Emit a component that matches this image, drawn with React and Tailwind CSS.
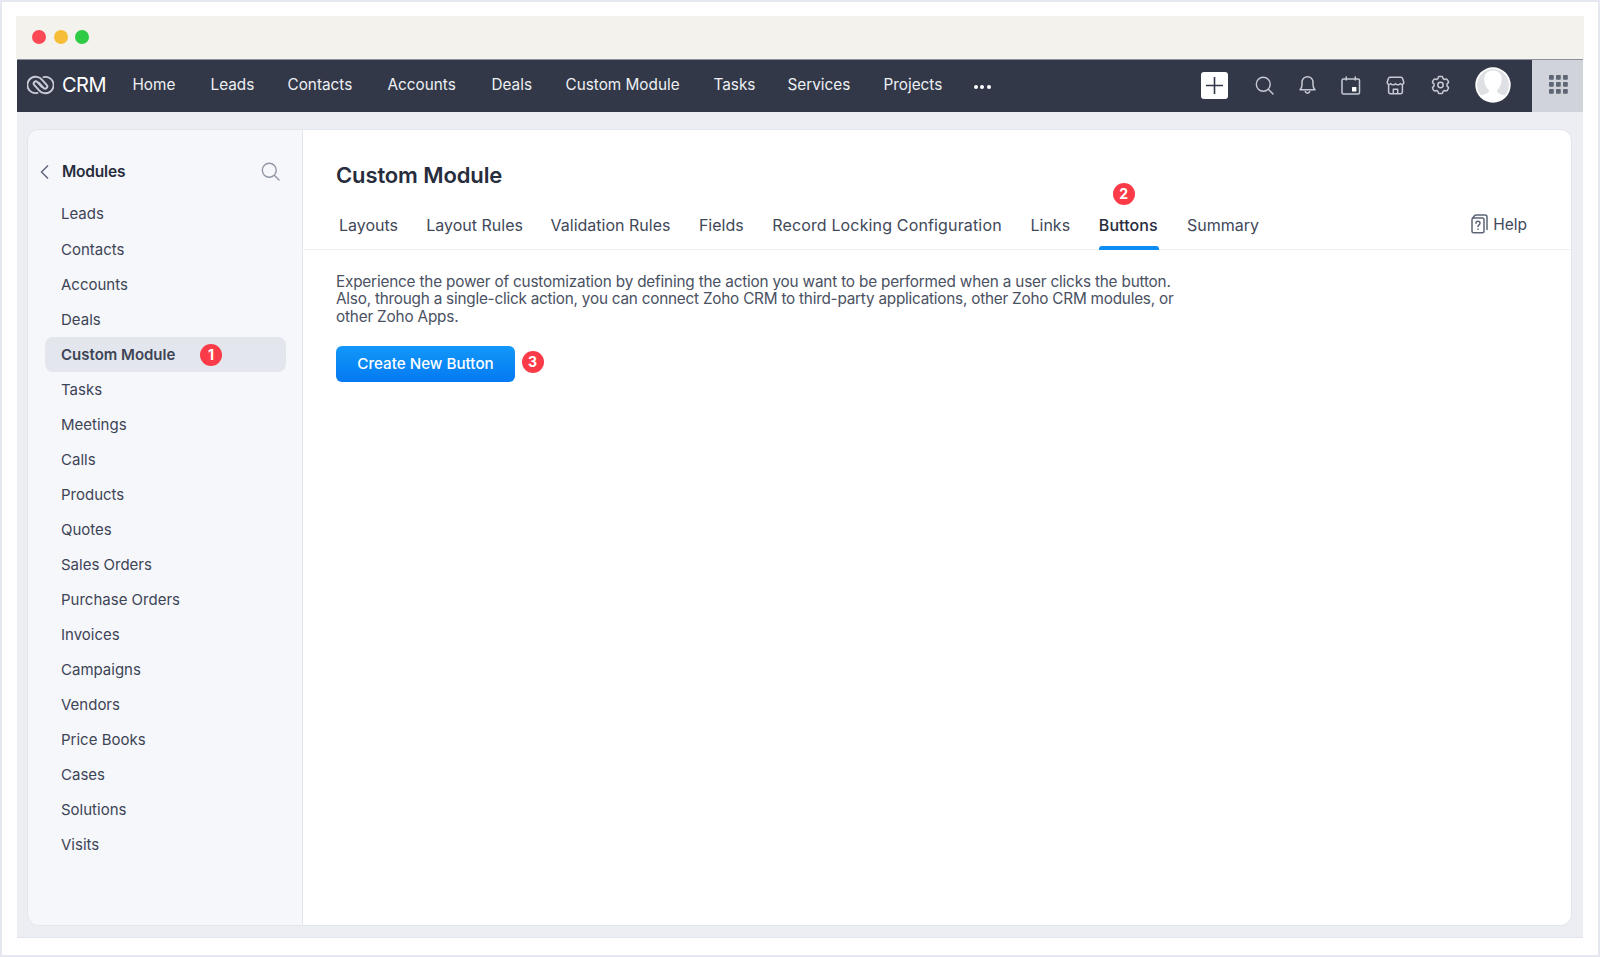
const navItems = [
  { label: 'Home', width: 'w-[43px]' },
  { label: 'Leads', width: 'w-[42px]' },
  { label: 'Contacts', width: 'w-[65px]' },
  { label: 'Accounts', width: 'w-[69px]' },
  { label: 'Deals', width: 'w-[39px]' },
  { label: 'Custom Module', width: 'w-[113px]' },
  { label: 'Tasks', width: 'w-[39px]' },
  { label: 'Services', width: 'w-[61px]' },
  { label: 'Projects', width: 'w-[58px]' },
];

const modules = [
  'Leads', 'Contacts', 'Accounts', 'Deals', 'Custom Module', 'Tasks', 'Meetings', 'Calls', 'Products', 'Quotes',
  'Sales Orders', 'Purchase Orders', 'Invoices', 'Campaigns', 'Vendors', 'Price Books', 'Cases', 'Solutions', 'Visits',
];

const tabs = [
  { label: 'Layouts', width: 'w-[59px]' },
  { label: 'Layout Rules', width: 'w-[96px]' },
  { label: 'Validation Rules', width: 'w-[120px]' },
  { label: 'Fields', width: 'w-[45px]' },
  { label: 'Record Locking Configuration', width: 'w-[230px] tracking-[0.150px]' },
  { label: 'Links', width: 'w-[40px]' },
  { label: 'Buttons', width: 'w-[60px]' },
  { label: 'Summary', width: 'w-[74px]' },
];

const StepBadge = ({ number, className = '' }) => (
  <span className={`flex h-[22px] w-[22px] items-center justify-center rounded-full bg-[#fb3c48] text-[14px] font-bold leading-none text-white ${className}`}>
    {number}
  </span>
);

const ZohoLogo = () => (
  <svg width="27" height="20" viewBox="0 0 27 20" fill="none" stroke="#c9ced8" strokeWidth="1.9" strokeLinecap="round">
    <path d="M10.500 17.900a8.200 8.200 0 1 1 4.400-13.200l4.900 5.300a2.200 2.200 0 0 1-3.200 3l-4.400-4.900" />
    <path d="M16.500 2.100a8.200 8.200 0 1 1-4.400 13.200L7.200 10a2.200 2.200 0 0 1 3.200-3l4.400 4.900" />
  </svg>
);

const SearchIcon = ({ size = 20 }) => (
  <svg width={size} height={size} viewBox="0 0 20 20" fill="none" stroke="currentColor" strokeWidth="1.500" strokeLinecap="round">
    <circle cx="8.700" cy="8.700" r="7.300" />
    <path d="m14 14 5 5" />
  </svg>
);

const BellIcon = () => (
  <svg width="17" height="20" viewBox="0 0 17 20" fill="none" stroke="#c5cad4" strokeWidth="1.500" strokeLinecap="round" strokeLinejoin="round">
    <path d="M1 14.700c1.500-1.300 2-2.600 2-5V7.200a5.500 5.500 0 0 1 11 0v2.500c0 2.400.5 3.700 2 5Z" />
    <path d="M6.300 16.500a2.300 2.300 0 0 0 4.400 0" />
  </svg>
);

const CalendarIcon = () => (
  <svg width="20" height="19" viewBox="0 0 20 19" fill="none" stroke="#c5cad4" strokeWidth="1.500">
    <rect x="1" y="3" width="17.500" height="15" rx="1.500" />
    <path d="M5.200 1v3M14.300 1v3" strokeLinecap="round" />
    <rect x="11" y="11" width="4.400" height="4.400" rx="0.500" fill="#fff" stroke="none" />
  </svg>
);

const StoreIcon = () => (
  <svg width="19" height="19" viewBox="0 0 19 19" fill="none" stroke="#c5cad4" strokeWidth="1.500" strokeLinejoin="round">
    <path d="M4 1.200h11c.9 0 1.400.4 1.600 1.200L17.800 6.200c.3 2-2.200 3-3.500 1.400-1.200 1.600-3.600 1.600-4.800 0-1.200 1.600-3.600 1.600-4.800 0C3.400 9.200.9 8.200 1.200 6.200L2.400 2.400C2.600 1.600 3.100 1.200 4 1.200Z" />
    <path d="M2.600 8.500v7.300c0 1.200.7 2 2 2h9.800c1.300 0 2-.8 2-2V8.500M7.300 17.600v-4.300h4.400v4.300" />
  </svg>
);

const GearIcon = () => (
  <svg width="19" height="20" viewBox="0 0 19 20" fill="none" stroke="#c5cad4" strokeWidth="1.500" strokeLinejoin="round">
    <path d="M8.200 1.400h2.600c.5 0 .8.300.9.800l.3 1.500 1.400.8 1.500-.5c.5-.2.900 0 1.200.4l1.300 2.300c.2.400.2.800-.2 1.200l-1.200 1v2.200l1.200 1c.4.400.4.800.2 1.200l-1.300 2.300c-.3.400-.7.600-1.200.4l-1.500-.5-1.400.8-.3 1.500c-.1.500-.4.800-.9.800H8.200c-.5 0-.8-.3-.9-.8L7 16.300l-1.400-.8-1.500.5c-.5.200-.9 0-1.200-.4l-1.300-2.300c-.2-.4-.2-.8.200-1.200l1.200-1V8.900l-1.200-1c-.4-.4-.4-.8-.2-1.200l1.300-2.300c.3-.4.700-.6 1.200-.4l1.500.5L7 3.700l.3-1.500c.1-.5.4-.8.9-.8Z" />
    <circle cx="9.500" cy="10" r="2.700" />
  </svg>
);

const Avatar = () => (
  <svg width="36" height="36" viewBox="0 0 36 36">
    <circle cx="18" cy="18" r="17.700" fill="#fff" />
    <circle cx="18" cy="18" r="15.900" fill="#dfe0e3" />
    <path d="M18 3.500c-6 0-9 4.200-8.700 9.300.2 4.400 1.900 8.200 4.700 10.200.3 3-2.400 3.800-8.200 5.800A17 17 0 0 0 18 35a17 17 0 0 0 12.200-6.200c-5.800-2-8.500-2.800-8.200-5.800 2.800-2 4.500-5.800 4.700-10.200C27 7.700 24 3.500 18 3.500Z" fill="#fff" />
  </svg>
);

const AppsGrid = () => (
  <svg width="19" height="19" viewBox="0 0 19 19" fill="#5f6675">
    {[0, 7, 14].map((y) => [0, 7, 14].map((x) => <rect key={`${x}-${y}`} x={x} y={y} width="4.800" height="4.800" rx="0.800" />))}
  </svg>
);

const HelpIcon = () => (
  <svg width="17" height="20" viewBox="0 0 17 20" fill="none" stroke="#5c6475" strokeWidth="1.500" strokeLinecap="round" strokeLinejoin="round">
    <rect x="1" y="4" width="12" height="14.800" rx="1.500" />
    <path d="M1.600 4.200 3.500 1.800c.4-.6.9-.8 1.500-.8h9c1.200 0 2 .8 2 2v12.500" />
    <path d="M5 9.300c0-2.600 4-2.600 4 0 0 1.600-2 1.500-2 3.200M7 15v.2" />
  </svg>
);

const TopBar = () => (
  <header className="ml-px flex h-[53px] items-center border-t border-[#8a8f9b] bg-[#323848] pl-[10px] text-white">
    <div className="flex h-full items-center pb-[2px]">
      <ZohoLogo />
      <span className="ml-[8px] w-[45px] text-[20px] tracking-[-0.500px]">CRM</span>
      <nav className="ml-[25.500px] flex items-center gap-[35px] pt-px text-[15.300px] text-[#eef0f4]">
        {navItems.map((item) => (
          <span key={item.label} className={`${item.width} whitespace-nowrap`}>{item.label}</span>
        ))}
        <span className="-ml-[3px] flex gap-[2.500px] pt-[2px]">
          <i className="h-[4px] w-[4px] rounded-full bg-white" />
          <i className="h-[4px] w-[4px] rounded-full bg-white" />
          <i className="h-[4px] w-[4px] rounded-full bg-white" />
        </span>
      </nav>
    </div>
    <div className="ml-auto flex h-full items-center">
      <div className="flex items-center pb-[2px] text-[#c5cad4]">
        <span className="flex h-[27px] w-[27px] items-center justify-center rounded-[3px] bg-white">
          <svg width="17" height="17" viewBox="0 0 17 17" stroke="#323848" strokeWidth="1.600">
            <path d="M8.500 0v17M0 8.500h17" />
          </svg>
        </span>
        <span className="ml-[27px]"><SearchIcon size={19} /></span>
        <span className="ml-[25px]"><BellIcon /></span>
        <span className="ml-[25px]"><CalendarIcon /></span>
        <span className="ml-[25px]"><StoreIcon /></span>
        <span className="ml-[25.500px]"><GearIcon /></span>
        <span className="ml-[25px]"><Avatar /></span>
      </div>
      <span className="ml-[21.500px] flex h-full w-[51px] items-center justify-center bg-[#d0d3da] pb-[3px] pl-[2px]"><AppsGrid /></span>
    </div>
  </header>
);

const Sidebar = () => (
  <aside className="w-[275px] shrink-0 border-r border-[#e1e6ec] bg-[#f6f7fb] px-[16.500px] pt-[24px]">
    <div className="flex h-[35px] items-center">
      <svg width="9" height="14" viewBox="0 0 9 14" fill="none" stroke="#5c6374" strokeWidth="1.400" className="-ml-[5px]">
        <path d="M8 .5 1.500 7 8 13.500" />
      </svg>
      <h2 className="ml-[13.500px] pt-px text-[15.500px] font-semibold tracking-[-0.200px] text-[#272d3d]">Modules</h2>
      <span className="ml-auto mr-[6px] text-[#9298a4]"><SearchIcon size={19} /></span>
    </div>
    <ul className="mt-[7.700px] text-[15px] text-[#3d4455]">
      {modules.map((name) => (
        <li
          key={name}
          className={`flex h-[35.060px] items-center rounded-[8px] pl-[16.500px] pt-px ${name === 'Custom Module' ? 'bg-[#e3e7ed] font-semibold' : ''}`}
        >
          <span className={name === 'Custom Module' ? 'w-[139px] whitespace-nowrap' : ''}>{name}</span>
          {name === 'Custom Module' && <StepBadge number={1} />}
        </li>
      ))}
    </ul>
  </aside>
);

const Content = () => (
  <main className="min-w-0 flex-1 bg-white">
    <h1 className="pl-[33px] pt-[29px] text-[22px] font-semibold leading-[32px] tracking-[-0.120px] text-[#272d3d]">Custom Module</h1>
    <div className="flex h-[59px] border-b border-[#f0f1f4] pl-[36px]">
      <div className="flex gap-[28.300px] text-[16px] text-[#414859]">
        {tabs.map((tab) => (
          <div key={tab.label} className={`${tab.width} relative flex items-center whitespace-nowrap pt-[10px]`}>
            {tab.label === 'Buttons' ? (
              <>
                <span className="font-medium tracking-[0.100px] text-[#272d3d]">{tab.label}</span>
                <StepBadge number={2} className="absolute -top-[8px] left-[14px]" />
                <i className="absolute -bottom-px left-0 h-[4px] w-full rounded-t-[3px] bg-[#0b8df5]" />
              </>
            ) : (
              tab.label
            )}
          </div>
        ))}
      </div>
      <div className="ml-auto mr-[44px] flex items-center gap-[5px] pt-[8px] text-[15.500px] text-[#414859]">
        <HelpIcon />
        <span className="pt-px">Help</span>
      </div>
    </div>
    <p className="pl-[33px] pt-[22.500px] text-[15.300px] leading-[17.600px] tracking-[-0.180px] text-[#4a5162]">
      Experience the power of customization by defining the action you want to be performed when a user clicks the button.
      <br />
      <span className="tracking-[-0.220px]">Also, through a single-click action, you can connect Zoho CRM to third-party applications, other Zoho CRM modules, or</span>
      <br />
      other Zoho Apps.
    </p>
    <div className="mt-[20.500px] flex items-start pl-[33px]">
      <button className="h-[36px] w-[179px] rounded-[6px] bg-linear-to-b from-[#1398f9] to-[#0679f2] pt-[2px] text-[15.200px] font-medium text-white">
        Create New Button
      </button>
      <StepBadge number={3} className="ml-[6.500px] mt-[5px]" />
    </div>
  </main>
);

const App = () => (
  <div className="h-[957px] w-[1600px] overflow-hidden border-2 border-[#e5e8f0] bg-white p-[14px] font-['Inter',sans-serif]">
    <div className="flex h-[43px] items-center gap-[7.500px] bg-[#f4f2ec] pb-px pl-[16px]">
      <span className="h-[14px] w-[14px] rounded-full bg-[#fb4a55]" />
      <span className="h-[14px] w-[14px] rounded-full bg-[#f6bd37]" />
      <span className="h-[14px] w-[14px] rounded-full bg-[#2fcb45]" />
    </div>
    <div className="mr-px">
      <TopBar />
      <div className="ml-px h-[826px] border-b border-[#e0e4ec] bg-[#edeef3] pl-[10px] pr-[11px] pt-[17px]">
        <div className="flex h-[797px] overflow-hidden rounded-[12px] border border-[#e1e6ec]">
          <Sidebar />
          <Content />
        </div>
      </div>
    </div>
  </div>
);

export default App;
